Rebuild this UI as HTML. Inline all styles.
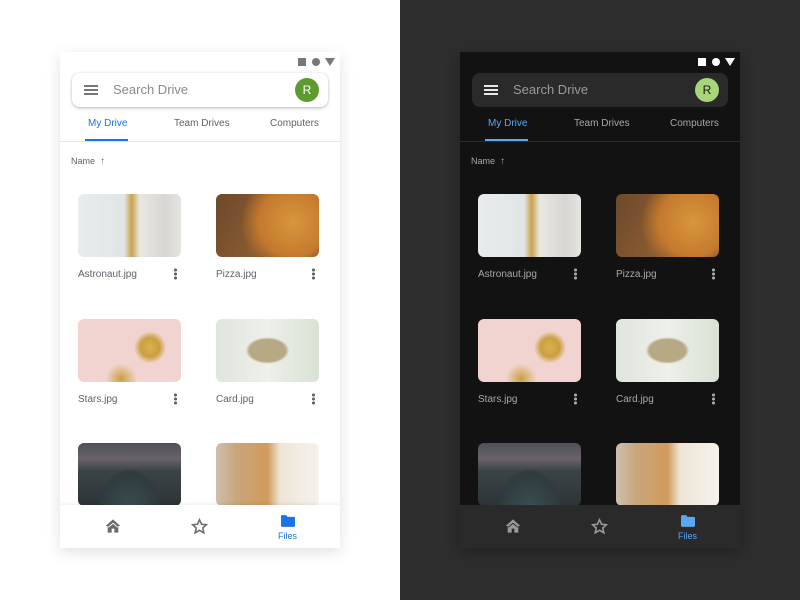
<!DOCTYPE html>
<html><head><meta charset="utf-8"><style>
*{margin:0;padding:0;box-sizing:border-box}
body{width:800px;height:600px;position:relative;overflow:hidden;font-family:"Liberation Sans",sans-serif;background:#fff}
.right{position:absolute;left:400px;top:0;width:400px;height:600px;background:#2e2e2e}
.ph{position:absolute;top:52px;width:280px;height:496px;overflow:hidden}
.l{left:60px;background:#fff;box-shadow:0 4px 14px rgba(0,0,0,.12)}
.d{left:460px;background:#121212;box-shadow:0 4px 14px rgba(0,0,0,.3)}
.a{position:absolute}
.sb{left:12px;top:21px;width:256px;height:34px;border-radius:8px}
.l .sb{background:#fff;box-shadow:0 1px 3px rgba(0,0,0,.3)}
.d .sb{background:#2a2a2a}
.hb{left:24px;top:33px;width:14px;height:10px;border-top:2px solid;border-bottom:2px solid}
.hb:after{content:"";position:absolute;left:0;top:2px;width:14px;height:2px;background:currentColor}
.st{left:53px;top:30px;font-size:13px}
.av{left:235px;top:26px;width:24px;height:24px;border-radius:50%;text-align:center;line-height:24px;font-size:12px}
.tab{top:66px;font-size:10px}
.ul{left:25px;top:87px;width:43px;height:2px}
.dv{left:0;top:89px;width:280px;height:1px}
.nm{left:11px;top:104px;font-size:9px}
.th{width:103px;height:63px;border-radius:6px}
.lb{font-size:10px}
.dt{width:3px;height:12px;background:radial-gradient(circle,currentColor 1.4px,transparent 1.7px) 0 0/3px 4px repeat-y}
.nav{left:0;top:453px;width:280px;height:43px}
.l .nav{background:#fff;box-shadow:0 -1px 4px rgba(0,0,0,.08)}
.d .nav{background:#2a2a2a}
.sq{top:6px;width:8px;height:8px}
.ci{top:6px;width:8px;height:8px;border-radius:50%}
.tr{top:6px;width:0;height:0;border-left:5px solid transparent;border-right:5px solid transparent;border-top:8px solid}
.i1{background:linear-gradient(90deg,#e8ecec 0%,#dfe5e6 45%,#c9a24a 52%,#e9e6e0 60%,#d8d6d2 85%,#e4e4e0)}
.i2{background:radial-gradient(circle at 75% 45%,#d9963c 0,#c47a2e 40%,transparent 62%),linear-gradient(120deg,#6b4a2c,#8a5a30 50%,#5c3a22)}
.i3{background:radial-gradient(circle at 70% 45%,#d9b24e 0,#c9a040 12%,transparent 20%),radial-gradient(circle at 42% 95%,#c9a040 0,transparent 18%),#f1d3d0}
.i4{background:radial-gradient(ellipse at 50% 50%,#b8a985 0,#b8a985 25%,transparent 30%),linear-gradient(90deg,#dfe6dc,#eef0ea 50%,#d8e2d4)}
.i5{background:radial-gradient(ellipse at 50% 110%,#3b5056 0,#2f3b3e 40%,transparent 45%),linear-gradient(180deg,#4d5156 0,#6a6268 25%,#3a4347 45%,#2c3436)}
.i6{background:linear-gradient(90deg,#cdbfae 0,#c8a67c 20%,#d39a5c 50%,#efe5d6 62%,#f5f2ec)}
</style></head><body>
<div class="right"></div>
<div id="L"></div>
<script>
function phone(cls,c){
let s=`<div class="ph ${cls}">
<div class="a sq" style="left:238px;background:${c.ic}"></div>
<div class="a ci" style="left:252px;background:${c.ic}"></div>
<div class="a tr" style="left:265px;border-top-color:${c.ic}"></div>
<div class="a sb"></div>
<div class="a hb" style="color:${c.hb};border-color:${c.hb}"></div>
<div class="a st" style="color:${c.st}">Search Drive</div>
<div class="a av" style="background:${c.av};color:${c.avt}">R</div>
<div class="a tab" style="left:28px;color:${c.bl}">My Drive</div>
<div class="a tab" style="left:114px;color:${c.tx}">Team Drives</div>
<div class="a tab" style="left:210px;color:${c.tx}">Computers</div>
<div class="a ul" style="background:${c.bl}"></div>
<div class="a dv" style="background:${c.dv}"></div>
<div class="a nm" style="color:${c.tx}">Name &nbsp;<b style="font-weight:normal;font-size:10px">↑</b></div>`;
const names=["Astronaut.jpg","Pizza.jpg","Stars.jpg","Card.jpg"];
const ys=[142,267,391];
for(let r=0;r<3;r++)for(let k=0;k<2;k++){
 let i=r*2+k,x=18+k*138;
 s+=`<div class="a th i${i+1}" style="left:${x}px;top:${ys[r]}px"></div>`;
 if(r<2)s+=`<div class="a lb" style="left:${x}px;top:${ys[r]+75}px;color:${c.tx}">${names[i]}</div><div class="a dt" style="left:${x+96}px;top:${ys[r]+74}px;color:${c.tx}"></div>`;
}
s+=`<div class="a nav"></div>
<svg class="a" style="left:45px;top:466px" width="16" height="16" viewBox="0 0 24 24"><path fill="${c.ni}" d="M12 2 1 12h3v10h6v-6h4v6h6V12h3z"/><path fill="${c.nav}" d="M5 13 12 7l7 6v1.8l-7-6-7 6z"/></svg>
<svg class="a" style="left:131px;top:466px" width="17" height="17" viewBox="0 0 24 24"><path fill="none" stroke="${c.ni}" stroke-width="2.2" d="M12 2.5l2.9 6.3 6.8.7-5.1 4.6 1.5 6.8L12 17.4l-6.1 3.5 1.5-6.8-5.1-4.6 6.8-.7z"/></svg>
<svg class="a" style="left:221px;top:463px" width="14" height="12" viewBox="0 0 24 20"><path fill="${c.bl}" d="M0 2a2 2 0 0 1 2-2h7l2 3h11a2 2 0 0 1 2 2v13a2 2 0 0 1-2 2H2a2 2 0 0 1-2-2z"/></svg>
<div class="a" style="left:218px;top:479px;font-size:9px;color:${c.bl}">Files</div>
</div>`;
return s;}
document.getElementById('L').innerHTML=
phone('l',{ic:'#777',hb:'#777',st:'#8a8a8a',av:'#5e9a2f',avt:'#fff',bl:'#1a73e8',tx:'#5f6368',dv:'#e6e6e6',ni:'#6b6b6b',nav:'#fff'})+
phone('d',{ic:'#fff',hb:'#e8e8e8',st:'#9a9a9a',av:'#a8d57a',avt:'#1a1a1a',bl:'#5aa6f0',tx:'#a8a8a8',dv:'#2e2e2e',ni:'#9a9a9a',nav:'#2a2a2a'});
</script>
</body></html>
